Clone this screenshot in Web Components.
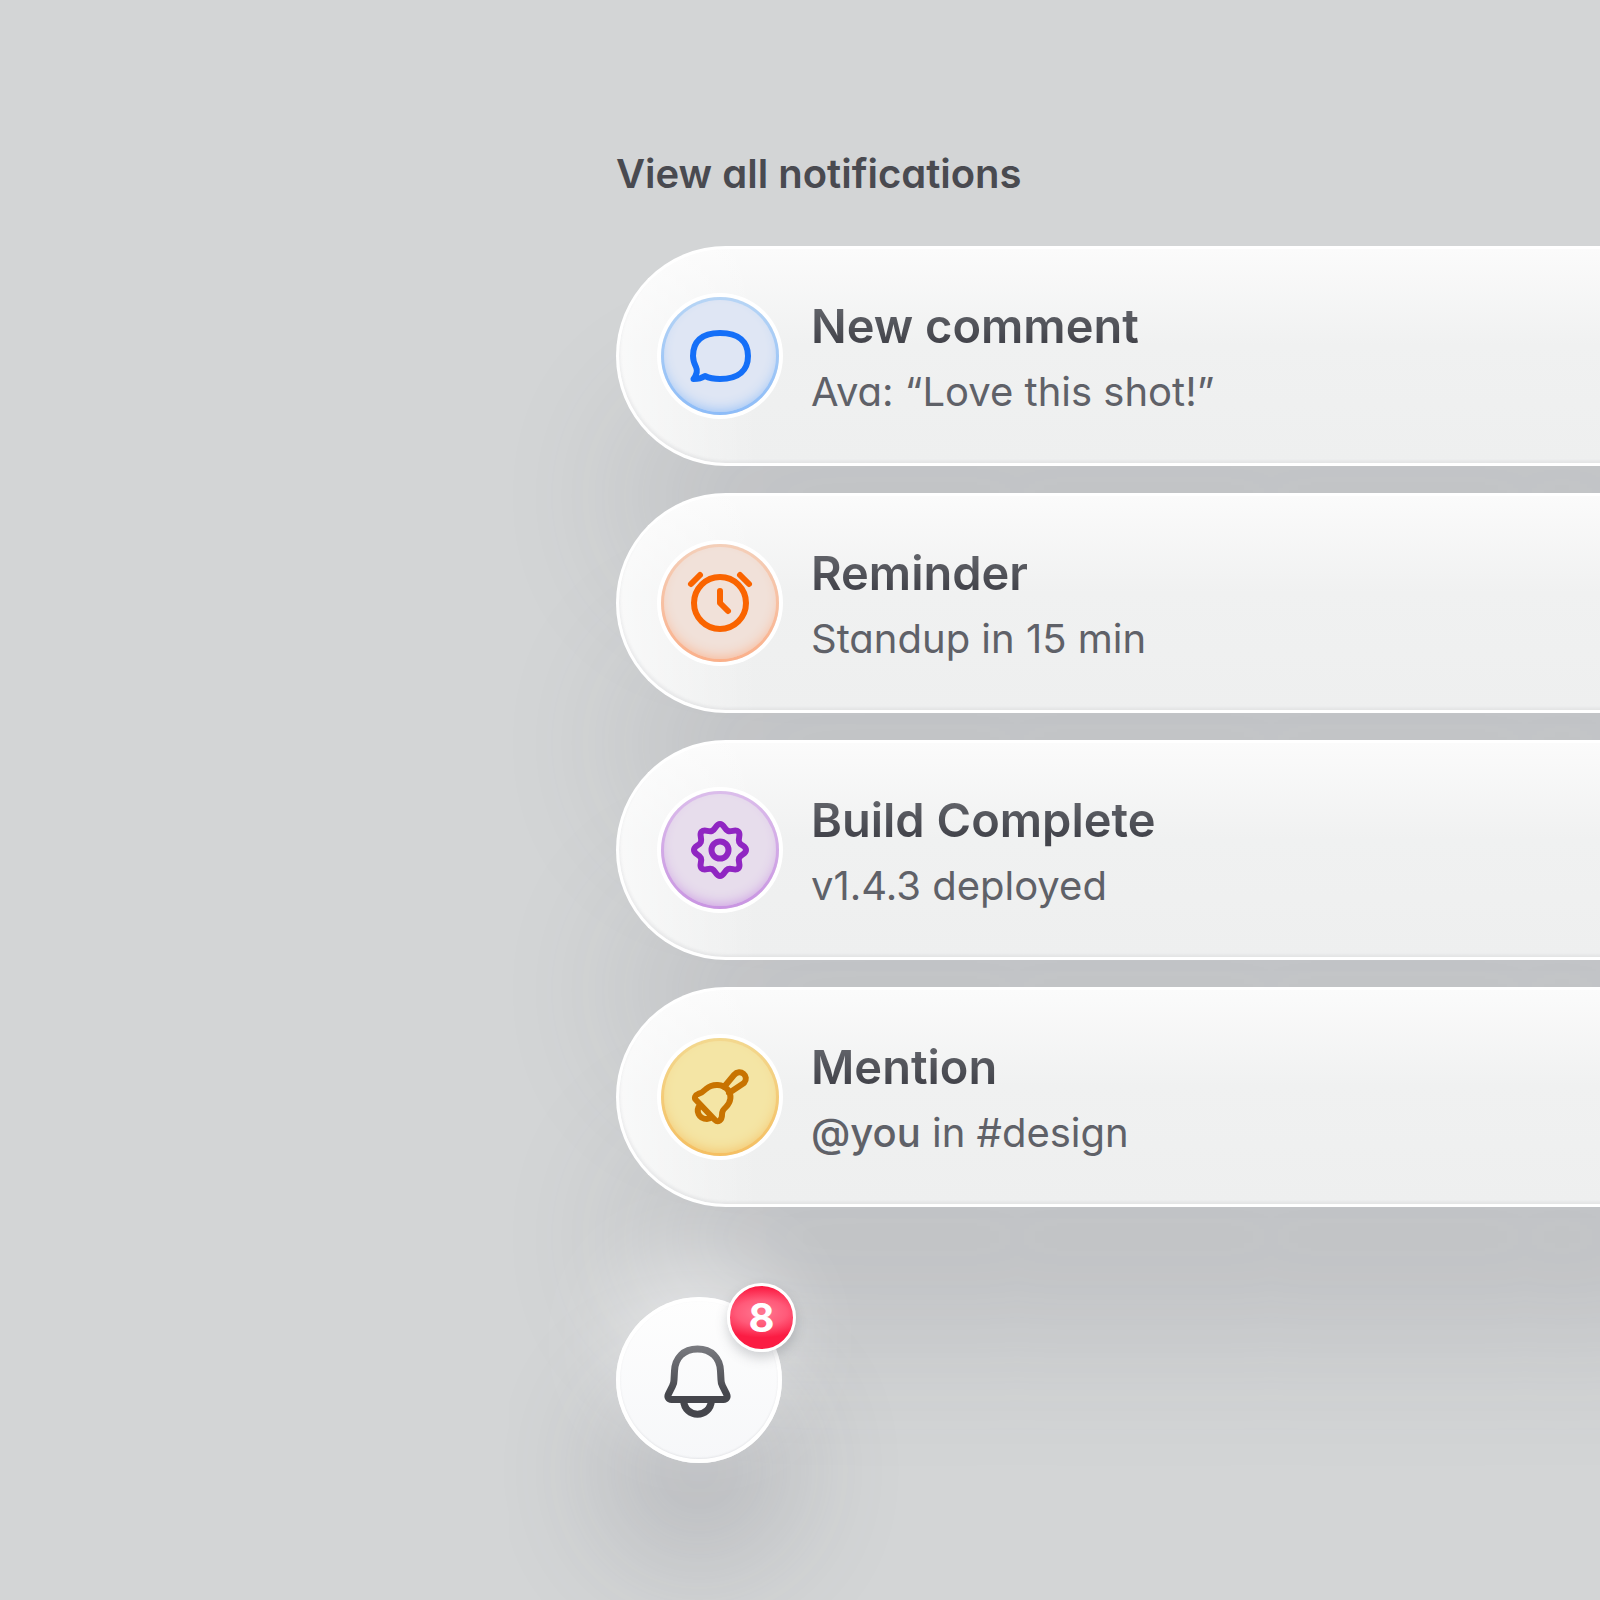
<!DOCTYPE html>
<html lang="en">
<head>
<meta charset="utf-8">
<title>Notifications</title>
<style>
  body {
    margin: 0;
    min-height: 100vh;
    overflow: hidden;
    background: #d3d5d6;
    font-family: Inter, "Liberation Sans", sans-serif;
    font-feature-settings: "cv11";
    color: #494a50;
  }

  b {
    font-weight: 500;
  }
</style>
</head>
<body>
<notification-panel>
  <a slot="heading" href="#all">View all notifications</a>

  <notification-card tone="blue">
    <svg slot="icon" viewBox="0 0 72 72">
      <path d="M36 13c19 0 28 9 28 23s-9 23-28 23c-6 0-10-.5-15-3-3 2-7 3-11.500 3 3-4 4.500-8 2.500-12-2-4-3-7-3-11 0-14 8-23 27-23z"/>
    </svg>
    <span slot="title">New comment</span>
    <span>Ava: “Love this shot!”</span>
  </notification-card>

  <notification-card tone="orange">
    <svg slot="icon" viewBox="0 0 72 72">
      <circle cx="36" cy="36" r="26"/>
      <path d="M36 24v12l8 8M7 17l9-9M65 17l-9-9"/>
    </svg>
    <span slot="title">Reminder</span>
    <span>Standup in 15 min</span>
  </notification-card>

  <notification-card tone="purple">
    <svg slot="icon" viewBox="0 0 72 72">
      <circle cx="36" cy="36" r="8.500"/>
      <path d="M36 10C40.200 10 40.200 15.350 43.920 16.880C47.600 18.400 51.400 14.650 54.380 17.620C57.350 20.600 53.600 24.400 55.120 28.080C56.650 31.800 62 31.800 62 36C62 40.200 56.650 40.200 55.120 43.920C53.600 47.600 57.350 51.400 54.380 54.380C51.400 57.350 47.600 53.600 43.920 55.120C40.200 56.650 40.200 62 36 62C31.800 62 31.800 56.650 28.080 55.120C24.400 53.600 20.600 57.350 17.620 54.380C14.650 51.400 18.400 47.600 16.880 43.920C15.350 40.200 10 40.200 10 36C10 31.800 15.350 31.800 16.880 28.080C18.400 24.400 14.650 20.600 17.620 17.620C20.600 14.650 24.400 18.400 28.080 16.880C31.800 15.350 31.800 10 36 10z"/>
    </svg>
    <span slot="title">Build Complete</span>
    <span>v1.4.3 deployed</span>
  </notification-card>

  <notification-card tone="yellow">
    <svg slot="icon" viewBox="0 0 72 72">
      <path d="M14 33c4-1 6-3 8-5 7-6 17-5 22 1 4 5 3 12-2 17-3 3-4 4-4 8 0 5-4 8-7 5L12 39c-2-2-1-5 2-6zM40 26l10-12c6-7 16 1 10 8L45 32M16 44c-5 6-1 14 7 14 2 0 4-1 5-2"/>
    </svg>
    <span slot="title">Mention</span>
    <span><b>@you</b> in #design</span>
  </notification-card>

  <notification-bell slot="footer" count="8"></notification-bell>
</notification-panel>

<script>
  // Wraps the heading link, the list of cards and the bell
  class NotificationPanel extends HTMLElement {
    constructor() {
      super();
      const shadow = this.attachShadow({ mode: 'open' });
      shadow.innerHTML = `
        <style>
          :host {
            display: block;
            isolation: isolate;
            min-height: 100vh;
            box-sizing: border-box;
            overflow: clip;
            padding: 148px 0 0 616px;
          }

          ::slotted(a) {
            display: block;
            width: max-content;
            font-size: 40px;
            line-height: 52px;
            font-weight: 600;
            color: #494a50;
            text-decoration: none;
          }

          .list {
            display: flex;
            flex-direction: column;
            gap: 27px;
            margin-top: 46px;
          }

          footer {
            margin-top: 90px;
          }
        </style>
        <slot name="heading"></slot>
        <section class="list"><slot></slot></section>
        <footer><slot name="footer"></slot></footer>
      `;
    }
  }

  // One notification pill: tone="blue|orange|purple|yellow"
  class NotificationCard extends HTMLElement {
    constructor() {
      super();
      const shadow = this.attachShadow({ mode: 'open' });
      shadow.innerHTML = `
        <style>
          :host {
            display: flex;
            position: relative;
            align-items: center;
            gap: 24px;
            box-sizing: border-box;
            min-height: 220px;
            padding-left: 38px;
            border: 3px solid #fff;
            border-right: 0;
            border-radius: 110px 0 0 110px;
            background:
              linear-gradient(90deg, rgba(255, 255, 255, .6), rgba(255, 255, 255, 0) 140px),
              linear-gradient(#fbfbfb, #f0f1f1 45%, #eeefef);
            box-shadow: inset 2px -3px 3px -1px rgba(90, 92, 100, .08);
          }

          /* soft drop shadow, kept behind every card */
          :host::before {
            content: "";
            position: absolute;
            z-index: -1;
            inset: 0 -240px 0 0;
            border-radius: 110px;
            box-shadow: 0 140px 140px -10px rgba(80, 82, 96, .15);
          }

          :host([tone="blue"]) { --ink: #146ff8; --fill: #dfe6f4; --edge: #8dbcf8; --rim: #b7d5f5; }
          :host([tone="orange"]) { --ink: #fa6400; --fill: #f1e1d9; --edge: #fbb08a; --rim: #f4cfb9; }
          :host([tone="purple"]) { --ink: #9026c2; --fill: #e7ddec; --edge: #c995e2; --rim: #dbbdeb; }
          :host([tone="yellow"]) { --ink: #c87300; --fill: #f4e5a5; --edge: #f5bf62; --rim: #f3d88f; }

          .disc {
            flex: none;
            display: grid;
            place-items: center;
            box-sizing: border-box;
            width: 118px;
            height: 118px;
            margin: 4px;
            border: 3px solid transparent;
            border-radius: 50%;
            background:
              linear-gradient(var(--fill), var(--fill)) padding-box,
              linear-gradient(var(--rim), var(--edge)) border-box;
            box-shadow:
              0 0 0 4px #fff,
              inset 0 -6px 14px -6px var(--edge);
          }

          ::slotted(svg) {
            width: 72px;
            height: 72px;
            fill: none;
            stroke: var(--ink);
            stroke-width: 6;
            stroke-linecap: round;
            stroke-linejoin: round;
          }

          .text {
            display: flex;
            flex-direction: column;
            gap: 4px;
            padding: 4px 0 0 4px;
            white-space: nowrap;
          }

          .title {
            font-size: 47px;
            line-height: 64px;
            font-weight: 600;
            color: transparent;
            background: linear-gradient(#62646a 20%, #43444b 75%);
            -webkit-background-clip: text;
            background-clip: text;
          }

          .detail {
            font-size: 40px;
            line-height: 60px;
            color: #5f6168;
          }
        </style>
        <div class="disc"><slot name="icon"></slot></div>
        <div class="text">
          <div class="title"><slot name="title"></slot></div>
          <div class="detail"><slot></slot></div>
        </div>
      `;
    }
  }

  // Round bell button with an unread badge
  class NotificationBell extends HTMLElement {
    constructor() {
      super();
      const shadow = this.attachShadow({ mode: 'open' });
      shadow.innerHTML = `
        <style>
          :host {
            display: block;
            position: relative;
            width: 166px;
            height: 166px;
          }

          button {
            display: grid;
            place-items: center;
            width: 100%;
            height: 100%;
            padding: 0;
            border: 0;
            border-radius: 50%;
            background: linear-gradient(#fefefe, #f6f7f9);
            box-shadow:
              inset 0 0 0 4px #fff,
              inset 0 -1px 2px 4px rgba(90, 92, 100, .1),
              0 -40px 90px rgba(255, 255, 255, .55),
              0 90px 120px 12px rgba(80, 82, 96, .2);
          }

          svg {
            width: 80px;
            height: 80px;
            fill: none;
            stroke: url(#ink);
            stroke-width: 7;
            stroke-linecap: round;
            stroke-linejoin: round;
          }

          .badge {
            position: absolute;
            top: -14px;
            right: -14px;
            box-sizing: border-box;
            width: 69px;
            height: 69px;
            border: 3px solid #fff;
            border-radius: 50%;
            background: radial-gradient(ellipse 80% 40% at 50% 42%, #ff7791, #ff5a79 50%, #fb1c43);
            box-shadow: 0 6px 12px rgba(80, 82, 92, .25);
            color: #fff;
            font-size: 40px;
            line-height: 64px;
            font-weight: 700;
            text-align: center;
            pointer-events: none;
          }
        </style>
        <button type="button" aria-label="Notifications">
          <svg viewBox="0 0 80 80">
            <defs>
              <linearGradient id="ink" gradientUnits="userSpaceOnUse" x1="0" y1="5" x2="0" y2="75">
                <stop offset="0" stop-color="#7b7c81"/>
                <stop offset=".7" stop-color="#45464c"/>
              </linearGradient>
            </defs>
            <path d="M38.500 9c-14 0-22.500 9-23 22l-.5 9c0 2-.5 4-1.500 6l-4 8c-1.500 3 0 5.500 3 5.500h52c3 0 4.500-2.500 3-5.500l-4-8c-1-2-1.500-4-1.500-6l-.5-9c-.5-13-9-22-23-22zM24.500 60c1 19 27 19 28 0"/>
          </svg>
        </button>
        <span class="badge"></span>
      `;
    }

    connectedCallback() {
      this.shadowRoot.querySelector('.badge').textContent = this.getAttribute('count');
    }
  }

  customElements.define('notification-panel', NotificationPanel);
  customElements.define('notification-card', NotificationCard);
  customElements.define('notification-bell', NotificationBell);
</script>
</body>
</html>
